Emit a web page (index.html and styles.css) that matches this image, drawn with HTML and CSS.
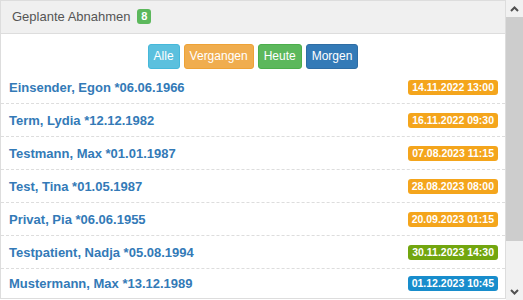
FILE: index.html
```html
<!DOCTYPE html>
<html lang="de">
<head>
  <meta charset="UTF-8" />
  <title>Geplante Abnahmen</title>
  <link rel="stylesheet" href="styles.css">
</head>
<body>

<div class="page">
  <div class="panel">
    <div class="panel-heading">Geplante Abnahmen <span class="count">8</span></div>

    <div class="filters">
      <button class="btn info">Alle</button>
      <button class="btn warning">Vergangen</button>
      <button class="btn success">Heute</button>
      <button class="btn primary">Morgen</button>
    </div>

    <div class="list">
      <div class="item"><a href="#">Einsender, Egon *06.06.1966</a><span class="date orange">14.11.2022 13:00</span></div>
      <div class="item"><a href="#">Term, Lydia *12.12.1982</a><span class="date orange">16.11.2022 09:30</span></div>
      <div class="item"><a href="#">Testmann, Max *01.01.1987</a><span class="date orange">07.08.2023 11:15</span></div>
      <div class="item"><a href="#">Test, Tina *01.05.1987</a><span class="date orange">28.08.2023 08:00</span></div>
      <div class="item"><a href="#">Privat, Pia *06.06.1955</a><span class="date orange">20.09.2023 01:15</span></div>
      <div class="item"><a href="#">Testpatient, Nadja *05.08.1994</a><span class="date green">30.11.2023 14:30</span></div>
      <div class="item"><a href="#">Mustermann, Max *13.12.1989</a><span class="date blue">01.12.2023 10:45</span></div>
    </div>
  </div>

  <!-- scrollbar of the widget frame -->
  <div class="scrollbar">
    <div class="arrow">
      <svg width="9" height="6" viewBox="0 0 9 6"><path d="M1 5 L4.5 1.5 L8 5" fill="none" stroke="#505050" stroke-width="2"/></svg>
    </div>
    <div class="thumb"></div>
    <div class="track"></div>
    <div class="arrow">
      <svg width="9" height="6" viewBox="0 0 9 6"><path d="M1 1 L4.5 4.5 L8 1" fill="none" stroke="#505050" stroke-width="2"/></svg>
    </div>
  </div>
</div>

</body>
</html>
```

FILE: styles.css
```css
body {
  margin: 0;
  font-family: 'Liberation Sans', Arial, sans-serif;
  background: #fff;
}

.page {
  display: flex;
  height: 300px;
  overflow: hidden;
}

.panel {
  flex: 1;
  align-self: flex-start;
  border: 1px solid #ddd;
}

.panel-heading {
  height: 32px;
  line-height: 32px;
  padding: 0 11px;
  background: #f0f0f0;
  border-bottom: 1px solid #ddd;
  font-size: 13px;
  color: #555;
}

.count {
  display: inline-block;
  margin-left: 3px;
  padding: 0 4px;
  height: 15px;
  line-height: 15px;
  border-radius: 3px;
  background: #5cb85c;
  color: #fff;
  font-size: 11px;
  font-weight: bold;
  vertical-align: 1px;
}

.filters {
  text-align: center;
  padding: 10px 0 2px;
  font-size: 0;
}

.btn {
  font-family: inherit;
  font-size: 12px;
  line-height: 17px;
  padding: 3px 5px;
  margin: 0 2px;
  border: 1px solid transparent;
  border-radius: 3px;
  color: #fff;
  cursor: pointer;
}

.info { background: #5bc0de; border-color: #46b8da; }
.warning { background: #f0ad4e; border-color: #eea236; }
.success { background: #5cb85c; border-color: #4cae4c; }
.primary { background: #337ab7; border-color: #2e6da4; }

.item {
  display: flex;
  justify-content: space-between;
  align-items: center;
  height: 32px;
  padding: 0 7px 0 8px;
  border-bottom: 1px dashed #ddd;
}

.item:last-child {
  height: 29px;
  border-bottom: none;
}

.item a {
  color: #337ab7;
  font-size: 13px;
  font-weight: bold;
  text-decoration: none;
}

.date {
  font-size: 10.5px;
  font-weight: bold;
  color: #fff;
  padding: 2px 4px 3px;
  line-height: 10px;
  border-radius: 3px;
}

.orange { background: #f4a51c; }
.green { background: #72a60f; }
.blue { background: #188dcc; }

.scrollbar {
  width: 17px;
  display: flex;
  flex-direction: column;
  background: #f1f1f1;
}

.arrow {
  height: 17px;
  display: flex;
  align-items: center;
  justify-content: center;
}

.thumb {
  height: 224px;
  background: #cdcdcd;
}

.track {
  flex: 1;
}
```
